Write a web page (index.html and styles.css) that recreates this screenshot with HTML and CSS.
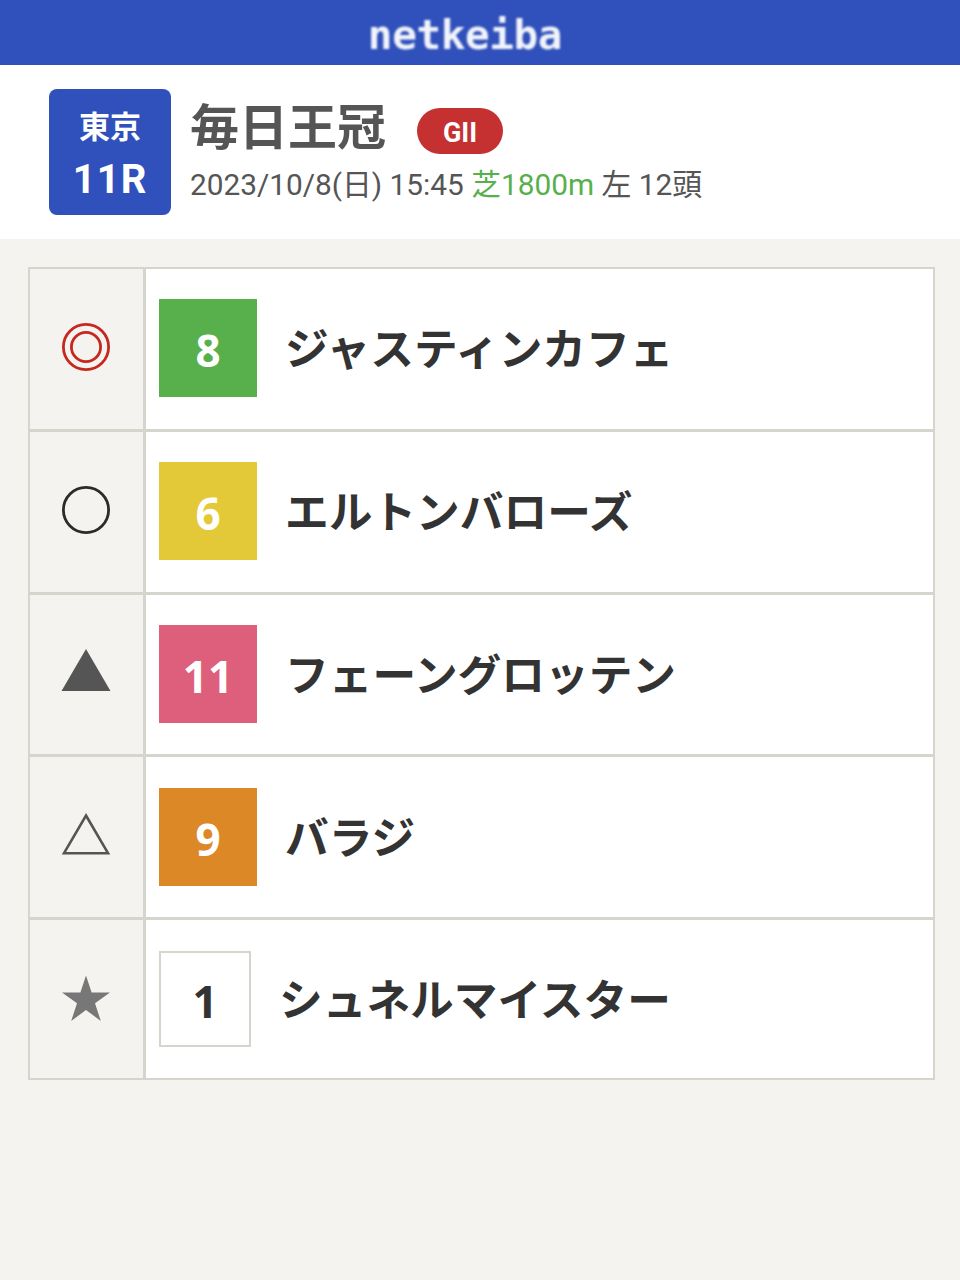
FILE: index.html
```html
<!DOCTYPE html>
<html lang="ja">
<head>
<meta charset="utf-8">
<title>netkeiba</title>
<link rel="stylesheet" href="styles.css">
</head>
<body>
<header class="topbar"><span class="logo">netkeiba</span></header>
<section class="race">
  <div class="race-no"><span class="place">東京</span><span class="round">11R</span></div>
  <div class="race-info">
    <div class="title-line"><h1 class="title">毎日王冠</h1><span class="grade">GII</span></div>
    <p class="meta">2023/10/8(日) 15:45 <span class="turf">芝1800m</span> 左 12頭</p>
  </div>
</section>
<main class="marks">
  <div class="row">
    <div class="mark"><svg class="icon" viewBox="0 0 48 48"><circle cx="24" cy="24" r="22.6" fill="none" stroke="#c5281f" stroke-width="2.8"/><circle cx="24" cy="24" r="14.6" fill="none" stroke="#c5281f" stroke-width="2.8"/></svg></div>
    <div class="horse"><span class="num waku-green">8</span><span class="name">ジャスティンカフェ</span></div>
  </div>
  <div class="row">
    <div class="mark"><svg class="icon" viewBox="0 0 48 48"><circle cx="24" cy="24" r="22.6" fill="none" stroke="#2b2b2b" stroke-width="2.8"/></svg></div>
    <div class="horse"><span class="num waku-yellow">6</span><span class="name">エルトンバローズ</span></div>
  </div>
  <div class="row">
    <div class="mark"><svg class="icon" viewBox="0 0 48 48"><path d="M24 0 L48.500 42 H-0.500 Z" fill="#555"/></svg></div>
    <div class="horse"><span class="num waku-pink">11</span><span class="name">フェーングロッテン</span></div>
  </div>
  <div class="row">
    <div class="mark"><svg class="icon" viewBox="0 0 48 48"><path d="M24 3.500 L46 41.200 H2 Z" fill="none" stroke="#555" stroke-width="2.600"/></svg></div>
    <div class="horse"><span class="num waku-orange">9</span><span class="name">バラジ</span></div>
  </div>
  <div class="row">
    <div class="mark"><svg class="icon" viewBox="0 0 48 48"><path d="M24 0.500 L29.600 17.600 H48 L33 28.300 L38.800 46 L24 35 L9.200 46 L15 28.300 L0 17.600 H18.400 Z" fill="#777"/></svg></div>
    <div class="horse"><span class="num waku-white">1</span><span class="name">シュネルマイスター</span></div>
  </div>
</main>
</body>
</html>
```
FILE: styles.css
```css
* { box-sizing: border-box; }
html, body { margin: 0; padding: 0; }
body {
  width: 960px;
  min-height: 1280px;
  background: #f4f3ef;
  font-family: Roboto, "Noto Sans CJK JP", sans-serif;
  color: #555;
}
.topbar {
  height: 65px;
  background: #3051bb;
  display: flex;
  align-items: center;
  justify-content: center;
  padding: 6px 30px 0 0;
}
.logo {
  font-family: "DejaVu Sans Mono", monospace;
  font-weight: 700;
  font-size: 41px;
  line-height: 59px;
  letter-spacing: -0.4px;
  color: #f2f4fb;
  filter: blur(0.8px);
}
.race {
  height: 174px;
  background: #fff;
  padding: 24px 49px;
  display: flex;
  gap: 19px;
}
.race-no {
  width: 122px;
  height: 126px;
  background: #3051bb;
  border-radius: 8px;
  color: #fff;
  display: flex;
  flex-direction: column;
  align-items: center;
  padding-top: 14px;
}
.place {
  font-family: "Noto Sans CJK JP", sans-serif;
  font-size: 31px;
  font-weight: 700;
  line-height: 44px;
}
.round {
  font-size: 40px;
  font-weight: 700;
  line-height: 52px;
  letter-spacing: 1px;
  margin-top: 7px;
}
.race-info { display: flex; flex-direction: column; }
.title-line { display: flex; align-items: flex-start; height: 76px; }
.title {
  margin: 0;
  font-family: "Noto Sans CJK JP", sans-serif;
  font-size: 49px;
  font-weight: 700;
  line-height: 70px;
  color: #555;
}
.grade {
  margin: 19px 0 0 31px;
  width: 86px;
  height: 46px;
  border-radius: 23px;
  background: #c53030;
  color: #fff;
  font-size: 27px;
  font-weight: 700;
  display: flex;
  align-items: center;
  justify-content: center;
  padding-top: 3px;
}
.meta {
  margin: 0;
  font-size: 29.8px;
  line-height: 40px;
  color: #555;
  white-space: nowrap;
}
.turf { color: #57b04c; }
.marks {
  margin: 28px 25px 0 28px;
  display: grid;
  grid-template-rows: repeat(4, 162.8px) 161.8px;
  border: solid #d5d4cd;
  border-width: 0 2px;
}
.row {
  display: flex;
  border-top: 2px solid #d5d4cd;
}
.row + .row {
  margin-top: -1px;
  border-top-width: 3px;
}
.row:last-child { border-bottom: 2px solid #d5d4cd; }
.mark {
  width: 116px;
  border-right: 3px solid #d5d4cd;
  display: flex;
  align-items: center;
  justify-content: center;
  padding: 0 1px 4px 0;
}
.row:last-child .mark { padding-bottom: 0; }
.icon { width: 48px; height: 48px; overflow: visible; display: block; }
.horse {
  flex: 1;
  background: #fff;
  display: flex;
  align-items: center;
  gap: 28px;
  padding: 0 0 2px 13px;
}
.row:last-child .horse { padding-bottom: 0; }
.num {
  width: 98px;
  height: 98px;
  display: flex;
  align-items: center;
  justify-content: center;
  font-family: "Noto Sans", sans-serif;
  font-size: 44px;
  font-weight: 700;
  color: #fff;
  flex: none;
  padding-top: 4px;
}
.waku-green { background: #57b04c; }
.waku-yellow { background: #e3c938; }
.waku-pink { background: #de5f7c; }
.waku-orange { background: #dd8827; }
.waku-white {
  width: 92px;
  height: 96px;
  background: #fff;
  color: #333;
  border: 2px solid #d5d4cd;
}
.name {
  font-family: "Noto Sans CJK JP", sans-serif;
  font-size: 43.7px;
  font-weight: 700;
  line-height: 60px;
  padding-bottom: 4px;
  color: #333;
  white-space: nowrap;
}
```
